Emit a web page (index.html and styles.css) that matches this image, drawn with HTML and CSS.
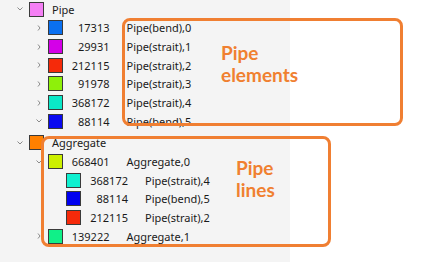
FILE: index.html
```html
<!DOCTYPE html>
<html>
<head>
<meta charset="utf-8">
<link rel="stylesheet" href="styles.css">
</head>
<body>
<div class="stage">
  <div class="panel">
    <div class="tree">
      <div class="row d0">
        <span class="chev"><svg width="12" height="10" viewBox="0 0 12 10"><polyline points="3.5,3.5 6,6 8.5,3.5" class="chv"/></svg></span>
        <span class="sw" style="background:#f47ff4"></span>
        <span class="name">Pipe</span>
      </div>
      <div class="row d1">
        <span class="chev"><svg width="12" height="10" viewBox="0 0 12 10"><polyline points="5,2.5 7,5 5,7.5" class="chv"/></svg></span>
        <span class="sw" style="background:#0a70f0"></span>
        <span class="num">17313</span><span class="lbl">Pipe(bend),0</span>
      </div>
      <div class="row d1">
        <span class="chev"><svg width="12" height="10" viewBox="0 0 12 10"><polyline points="5,2.5 7,5 5,7.5" class="chv"/></svg></span>
        <span class="sw" style="background:#d400e8"></span>
        <span class="num">29931</span><span class="lbl">Pipe(strait),1</span>
      </div>
      <div class="row d1">
        <span class="chev"><svg width="12" height="10" viewBox="0 0 12 10"><polyline points="5,2.5 7,5 5,7.5" class="chv"/></svg></span>
        <span class="sw" style="background:#f52a0a"></span>
        <span class="num">212115</span><span class="lbl">Pipe(strait),2</span>
      </div>
      <div class="row d1">
        <span class="chev"><svg width="12" height="10" viewBox="0 0 12 10"><polyline points="5,2.5 7,5 5,7.5" class="chv"/></svg></span>
        <span class="sw" style="background:#8ef00a"></span>
        <span class="num">91978</span><span class="lbl">Pipe(strait),3</span>
      </div>
      <div class="row d1">
        <span class="chev"><svg width="12" height="10" viewBox="0 0 12 10"><polyline points="5,2.5 7,5 5,7.5" class="chv"/></svg></span>
        <span class="sw" style="background:#0ae8c8"></span>
        <span class="num">368172</span><span class="lbl">Pipe(strait),4</span>
      </div>
      <div class="row d1">
        <span class="chev"><svg width="12" height="10" viewBox="0 0 12 10"><polyline points="3.5,3.5 6,6 8.5,3.5" class="chv"/></svg></span>
        <span class="sw" style="background:#0a0af0"></span>
        <span class="num">88114</span><span class="lbl">Pipe(bend),5</span>
      </div>

      <div class="row d0 gap">
        <span class="chev"><svg width="12" height="10" viewBox="0 0 12 10"><polyline points="3.5,3.5 6,6 8.5,3.5" class="chv"/></svg></span>
        <span class="sw" style="background:#ff8000"></span>
        <span class="name">Aggregate</span>
      </div>
      <div class="row d1">
        <span class="chev"><svg width="12" height="10" viewBox="0 0 12 10"><polyline points="3.5,3.5 6,6 8.5,3.5" class="chv"/></svg></span>
        <span class="sw" style="background:#ccf000"></span>
        <span class="num">668401</span><span class="lbl">Aggregate,0</span>
      </div>
      <div class="row d2">
        <span class="chev"></span>
        <span class="sw" style="background:#10f0d0"></span>
        <span class="num">368172</span><span class="lbl">Pipe(strait),4</span>
      </div>
      <div class="row d2">
        <span class="chev"></span>
        <span class="sw" style="background:#0000f0"></span>
        <span class="num">88114</span><span class="lbl">Pipe(bend),5</span>
      </div>
      <div class="row d2">
        <span class="chev"></span>
        <span class="sw" style="background:#f52a0a"></span>
        <span class="num">212115</span><span class="lbl">Pipe(strait),2</span>
      </div>
      <div class="row d1">
        <span class="chev"><svg width="12" height="10" viewBox="0 0 12 10"><polyline points="5,2.5 7,5 5,7.5" class="chv"/></svg></span>
        <span class="sw" style="background:#10f088"></span>
        <span class="num">139222</span><span class="lbl">Aggregate,1</span>
      </div>
    </div>
  </div>
  <div class="callout c1"><span class="note n1">Pipe<br>elements</span></div>
  <div class="callout c2"><span class="note n2">Pipe<br>lines</span></div>
</div>
</body>
</html>
```
FILE: styles.css
```css
html, body {
  margin: 0;
  padding: 0;
  background: #ffffff;
}
.stage {
  position: relative;
  width: 429px;
  height: 262px;
  overflow: hidden;
  font-family: "Noto Sans", "DejaVu Sans", sans-serif;
  font-size: 11px;
  color: #1a1a1a;
}
.panel {
  width: 290px;
  height: 262px;
  background: #f4f4f4;
}
.tree {
  display: flex;
  flex-direction: column;
  padding-top: 0;
}
.row {
  display: flex;
  align-items: center;
  height: 18.67px;
  white-space: nowrap;
}
.row.d0 { padding-left: 14px; }
.row.d1 { padding-left: 32.5px; }
.row.d2 { padding-left: 51px; }
.row.gap { margin-top: 3px; }
.chev {
  width: 12px;
  height: 10px;
  margin-right: 3px;
  display: flex;
}
.chv {
  fill: none;
  stroke: #8a8a8a;
  stroke-width: 1;
}
.sw {
  width: 15px;
  height: 15px;
  box-sizing: border-box;
  border: 1px solid #3a3a3a;
  flex: none;
}
.name {
  margin-left: 8px;
}
.num {
  width: 47px;
  text-align: right;
}
.lbl {
  margin-left: 17px;
}
.callout {
  position: absolute;
  box-sizing: border-box;
  border: 3px solid #f07f32;
  border-radius: 8px;
}
.c1 {
  left: 122px;
  top: 18px;
  width: 281px;
  height: 108px;
}
.c2 {
  left: 41px;
  top: 136px;
  width: 290px;
  height: 111px;
}
.note {
  position: absolute;
  font-family: Lato, "Open Sans", sans-serif;
  font-weight: bold;
  font-size: 19px;
  line-height: 22px;
  color: #f08030;
}
.n1 {
  left: 96px;
  top: 21px;
}
.n2 {
  left: 192px;
  top: 18px;
}
```
